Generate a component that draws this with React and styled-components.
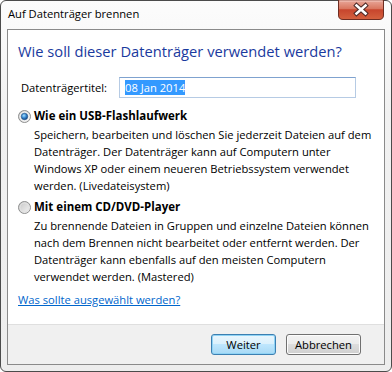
import React from 'react';
import styled, { createGlobalStyle } from 'styled-components';

const GlobalStyle = createGlobalStyle`
  html, body {
    margin: 0;
    padding: 0;
    background: #ffffff;
  }
  body {
    font-family: 'Segoe UI', 'Open Sans', 'Noto Sans', sans-serif;
    color: #000;
  }
`;

const Window = styled.div`
  width: 392px;
  height: 372px;
  box-sizing: border-box;
  border: 1px solid #4b4b4b;
  border-radius: 6px;
  background: linear-gradient(#fcfcfc, #f1f1f1 30%, #ededed);
  padding: 0 6px 6px;
  display: flex;
  flex-direction: column;
`;

const TitleBar = styled.div`
  height: 28px;
  display: flex;
  justify-content: space-between;
  align-items: flex-start;
`;

const TitleText = styled.div`
  font-size: 11.2px;
  line-height: 16px;
  padding: 5px 0 0 1px;
`;

const CloseButton = styled.div`
  width: 46px;
  height: 20px;
  margin: -1px 1px 0 0;
  display: flex;
`;

const Client = styled.div`
  flex: 1;
  min-height: 0;
  display: flex;
  flex-direction: column;
  border: 1px solid #8a8a8a;
  background: #fff;
`;

const Content = styled.div`
  flex: 1;
  min-height: 0;
  padding: 10px 10px 0;
  white-space: nowrap;
`;

const Instruction = styled.div`
  font-size: 14.7px;
  line-height: 22px;
  color: #1a3a9e;
`;

const TitleRow = styled.div`
  display: flex;
  align-items: center;
  margin-top: 15px;
  height: 21px;
`;

const Label = styled.span`
  font-size: 11.2px;
  width: 98px;
  padding-left: 3px;
`;

const TextBox = styled.div`
  box-sizing: border-box;
  width: 237px;
  height: 21px;
  border: 1px solid #b6cbe4;
  border-top-color: #7fa2cf;
  padding: 2px 5px;
  display: flex;
  align-items: center;
`;

const Selected = styled.span`
  background: #3399ff;
  color: #fff;
  font-size: 11.2px;
  line-height: 15px;
`;

const Option = styled.div`
  margin-top: ${p => p.$gap}px;
`;

const OptionHead = styled.div`
  display: flex;
  align-items: center;
  gap: 3px;
  font-size: 11.5px;
  line-height: 16px;
  font-weight: 700;
`;

const OptionText = styled.div`
  padding-left: 16px;
  font-size: 11.2px;
  line-height: 17px;
  margin-top: 2px;
`;

const HelpLink = styled.a`
  display: block;
  width: max-content;
  margin-top: 7px;
  font-size: 11.2px;
  line-height: 16px;
  color: #0066cc;
  text-decoration: underline;
`;

const Footer = styled.div`
  height: 40px;
  flex-shrink: 0;
  box-sizing: border-box;
  border-top: 1px solid #dfdfdf;
  background: #f0f0f0;
  display: flex;
  justify-content: flex-end;
  align-items: center;
  gap: 10px;
  padding-right: 23px;
`;

const Button = styled.div`
  box-sizing: border-box;
  width: ${p => p.$w}px;
  height: 21px;
  border-radius: 3px;
  font-size: 11.2px;
  display: flex;
  align-items: center;
  justify-content: center;
  border: 1px solid ${p => (p.$default ? '#3c7fb1' : '#707070')};
  background: ${p =>
    p.$default
      ? 'linear-gradient(#eaf6fd, #d9f0fc 50%, #bee6fd 50%, #a7d9f5)'
      : 'linear-gradient(#f2f2f2, #ebebeb 50%, #dddddd 50%, #cfcfcf)'};
  box-shadow: ${p => (p.$default ? '0 0 0 1px #8fd3f5 inset' : 'inset 0 0 0 1px #fcfcfc')};
`;

const Radio = ({ checked }) => (
  <svg width="13" height="13" viewBox="0 0 13 13">
    <defs>
      <linearGradient id={checked ? 'rf1' : 'rf2'} x1="0" y1="0" x2="1" y2="1">
        <stop offset="0" stopColor="#c4c4c4" />
        <stop offset="1" stopColor="#f6f6f6" />
      </linearGradient>
      <radialGradient id="rdot" cx="0.4" cy="0.35" r="0.7">
        <stop offset="0" stopColor="#a6e0ff" />
        <stop offset="0.5" stopColor="#3a8ad2" />
        <stop offset="1" stopColor="#0c3c7a" />
      </radialGradient>
    </defs>
    <circle cx="6.5" cy="6.5" r="6" fill={`url(#${checked ? 'rf1' : 'rf2'})`} stroke="#8e8f8f" />
    <circle cx="6.5" cy="6.5" r="4.5" fill="none" stroke={checked ? '#f4f4f4' : '#e2e2e2'} />
    {checked && <circle cx="6.5" cy="6.5" r="3.2" fill="url(#rdot)" stroke="#1a4f8a" strokeWidth="0.6" />}
  </svg>
);

const CloseGlyph = () => (
  <svg width="46" height="20" viewBox="0 0 46 20">
    <defs>
      <linearGradient id="cbg" x1="0" y1="0" x2="0" y2="1">
        <stop offset="0" stopColor="#e9a99c" />
        <stop offset="0.45" stopColor="#d9765f" />
        <stop offset="0.5" stopColor="#c7452d" />
        <stop offset="1" stopColor="#d5623f" />
      </linearGradient>
    </defs>
    <path d="M0.5 0 H45.5 V15 Q45.5 19.5 41 19.5 H5 Q0.5 19.5 0.5 15 Z" fill="url(#cbg)" stroke="#6e2d22" />
    <path d="M1.5 1 H44.5" stroke="#f3c7bd" strokeWidth="1" />
    <path d="M18.5 5.5 L27.5 13.5 M27.5 5.5 L18.5 13.5" stroke="#4d2a28" strokeWidth="4.6" strokeLinecap="square" />
    <path d="M18.5 5.5 L27.5 13.5 M27.5 5.5 L18.5 13.5" stroke="#ffffff" strokeWidth="2.6" strokeLinecap="square" />
  </svg>
);

export default function App() {
  return (
    <>
      <GlobalStyle />
      <Window>
        <TitleBar>
          <TitleText>Auf Datenträger brennen</TitleText>
          <CloseButton>
            <CloseGlyph />
          </CloseButton>
        </TitleBar>
        <Client>
          <Content>
            <Instruction>Wie soll dieser Datenträger verwendet werden?</Instruction>
            <TitleRow>
              <Label>Datenträgertitel:</Label>
              <TextBox>
                <Selected>08 Jan 2014</Selected>
              </TextBox>
            </TitleRow>
            <Option $gap={10}>
              <OptionHead>
                <Radio checked />
                Wie ein USB-Flashlaufwerk
              </OptionHead>
              <OptionText>
                Speichern, bearbeiten und löschen Sie jederzeit Dateien auf dem<br />
                Datenträger. Der Datenträger kann auf Computern unter<br />
                Windows XP oder einem neueren Betriebssystem verwendet<br />
                werden. (Livedateisystem)
              </OptionText>
            </Option>
            <Option $gap={5}>
              <OptionHead>
                <Radio />
                Mit einem CD/DVD-Player
              </OptionHead>
              <OptionText>
                Zu brennende Dateien in Gruppen und einzelne Dateien können<br />
                nach dem Brennen nicht bearbeitet oder entfernt werden. Der<br />
                Datenträger kann ebenfalls auf den meisten Computern<br />
                verwendet werden. (Mastered)
              </OptionText>
            </Option>
            <HelpLink href="#">Was sollte ausgewählt werden?</HelpLink>
          </Content>
          <Footer>
            <Button $default $w={65}>Weiter</Button>
            <Button $w={75}>Abbrechen</Button>
          </Footer>
        </Client>
      </Window>
    </>
  );
}
